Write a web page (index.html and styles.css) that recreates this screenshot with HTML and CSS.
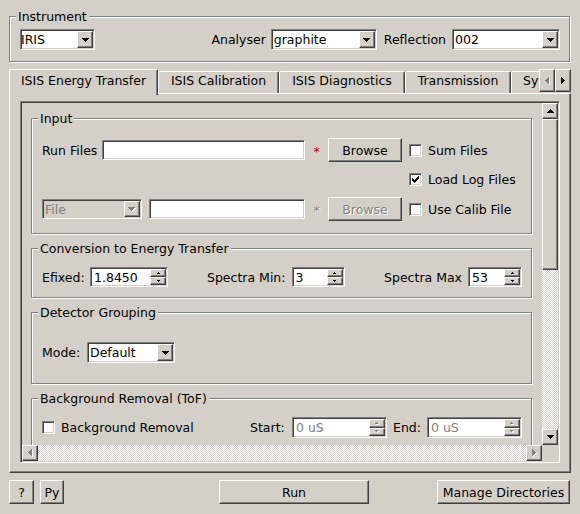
FILE: index.html
```html
<!DOCTYPE html>
<html>
<head>
<meta charset="utf-8">
<title>Indirect Data Reduction</title>
<link rel="stylesheet" href="styles.css">
</head>
<body>
<div class="window">
  <fieldset class="group instrument">
    <legend>Instrument</legend>
    <div class="inst-row">
      <div class="combo c-iris"><span class="combo-text tight">IRIS</span><span class="combo-btn"><svg width="7" height="4"><path d="M0 0h7v1h-1v1h-1v1h-1v1h-1v-1h-1v-1h-1v-1h-1z"/></svg></span></div>
      <span class="lbl analyser">Analyser</span>
      <div class="combo c-analyser"><span class="combo-text">graphite</span><span class="combo-btn"><svg width="7" height="4"><path d="M0 0h7v1h-1v1h-1v1h-1v1h-1v-1h-1v-1h-1v-1h-1z"/></svg></span></div>
      <span class="lbl reflection">Reflection</span>
      <div class="combo c-refl"><span class="combo-text">002</span><span class="combo-btn"><svg width="7" height="4"><path d="M0 0h7v1h-1v1h-1v1h-1v1h-1v-1h-1v-1h-1v-1h-1z"/></svg></span></div>
    </div>
  </fieldset>

  <div class="tabwidget">
    <div class="tabbar">
      <div class="tab sel t0">ISIS Energy Transfer</div>
      <div class="tab t1">ISIS Calibration</div>
      <div class="tab t2">ISIS Diagnostics</div>
      <div class="tab t3">Transmission</div>
      <div class="tab t4">Sy</div>
      <div class="tabscroll">
        <span class="raised tsb"><svg width="5" height="8"><path fill="#fff" transform="translate(1,1)" d="M3 0h1v7h-1v-1h-1v-1h-1v-1h-1v-1h1v-1h1v-1h1z"/><path fill="#808080" d="M3 0h1v7h-1v-1h-1v-1h-1v-1h-1v-1h1v-1h1v-1h1z"/></svg></span>
        <span class="raised tsb"><svg width="4" height="7"><path d="M0 0h1v1h1v1h1v1h1v1h-1v1h-1v1h-1v1h-1z"/></svg></span>
      </div>
    </div>
    <div class="pane">
      <div class="scrollarea">
        <div class="viewport">
          <div class="content">
            <fieldset class="group g-input">
              <legend>Input</legend>
              <div class="input-grid">
                <div class="filerow">
                  <span class="lbl runlbl">Run Files</span>
                  <div class="lineedit grow"></div>
                  <span class="star req">*</span>
                  <div class="btn browse">Browse</div>
                </div>
                <label class="check"><span class="box"></span><span>Sum Files</span></label>
                <div></div>
                <label class="check"><span class="box"><svg width="11" height="11"><path d="M2 4h1v3h-1zM3 5h1v3h-1zM4 6h1v3h-1zM5 5h1v3h-1zM6 4h1v3h-1zM7 3h1v3h-1zM8 2h1v3h-1z"/></svg></span><span>Load Log Files</span></label>
                <div class="filerow">
                  <div class="combo c-file disabled"><span class="combo-text">File</span><span class="combo-btn"><svg width="8" height="5"><path fill="#fff" transform="translate(1,1)" d="M0 0h7v1h-1v1h-1v1h-1v1h-1v-1h-1v-1h-1v-1h-1z"/><path fill="#808080" d="M0 0h7v1h-1v1h-1v1h-1v1h-1v-1h-1v-1h-1v-1h-1z"/></svg></span></div>
                  <div class="lineedit grow"></div>
                  <span class="star off">*</span>
                  <div class="btn browse disabled">Browse</div>
                </div>
                <label class="check"><span class="box"></span><span>Use Calib File</span></label>
              </div>
            </fieldset>

            <fieldset class="group g-conv">
              <legend>Conversion to Energy Transfer</legend>
              <div class="conv-grid">
                <span class="lbl">Efixed:</span>
                <div class="spin"><span class="spin-text">1.8450</span><span class="spin-btns"><span class="raised sb"><svg width="3" height="2"><path d="M1 0h1v1h1v1h-3v-1h1z"/></svg></span><span class="raised sb"><svg width="3" height="2"><path d="M0 0h3v1h-1v1h-1v-1h-1z"/></svg></span></span></div>
                <span class="lbl rlbl">Spectra Min:</span>
                <div class="spin"><span class="spin-text">3</span><span class="spin-btns"><span class="raised sb"><svg width="3" height="2"><path d="M1 0h1v1h1v1h-3v-1h1z"/></svg></span><span class="raised sb"><svg width="3" height="2"><path d="M0 0h3v1h-1v1h-1v-1h-1z"/></svg></span></span></div>
                <span class="lbl rlbl">Spectra Max</span>
                <div class="spin"><span class="spin-text">53</span><span class="spin-btns"><span class="raised sb"><svg width="3" height="2"><path d="M1 0h1v1h1v1h-3v-1h1z"/></svg></span><span class="raised sb"><svg width="3" height="2"><path d="M0 0h3v1h-1v1h-1v-1h-1z"/></svg></span></span></div>
              </div>
            </fieldset>

            <fieldset class="group g-det">
              <legend>Detector Grouping</legend>
              <div class="det-row">
                <span class="lbl modelbl">Mode:</span>
                <div class="combo c-mode"><span class="combo-text">Default</span><span class="combo-btn"><svg width="7" height="4"><path d="M0 0h7v1h-1v1h-1v1h-1v1h-1v-1h-1v-1h-1v-1h-1z"/></svg></span></div>
              </div>
            </fieldset>

            <fieldset class="group g-bg">
              <legend>Background Removal (ToF)</legend>
              <div class="bg-grid">
                <label class="check"><span class="box"></span><span>Background Removal</span></label>
                <span class="lbl">Start:</span>
                <div class="spin tall off"><span class="spin-text">0 uS</span><span class="spin-btns"><span class="raised sb"><svg width="4" height="3"><path fill="#fff" transform="translate(1,1)" d="M1 0h1v1h1v1h-3v-1h1z"/><path fill="#808080" d="M1 0h1v1h1v1h-3v-1h1z"/></svg></span><span class="raised sb"><svg width="4" height="3"><path fill="#fff" transform="translate(1,1)" d="M0 0h3v1h-1v1h-1v-1h-1z"/><path fill="#808080" d="M0 0h3v1h-1v1h-1v-1h-1z"/></svg></span></span></div>
                <span class="lbl endlbl">End:</span>
                <div class="spin tall off"><span class="spin-text">0 uS</span><span class="spin-btns"><span class="raised sb"><svg width="4" height="3"><path fill="#fff" transform="translate(1,1)" d="M1 0h1v1h1v1h-3v-1h1z"/><path fill="#808080" d="M1 0h1v1h1v1h-3v-1h1z"/></svg></span><span class="raised sb"><svg width="4" height="3"><path fill="#fff" transform="translate(1,1)" d="M0 0h3v1h-1v1h-1v-1h-1z"/><path fill="#808080" d="M0 0h3v1h-1v1h-1v-1h-1z"/></svg></span></span></div>
              </div>
            </fieldset>
          </div>
        </div>
        <div class="vscroll">
          <span class="raised sbtn"><svg width="7" height="4"><path d="M3 0h1v1h1v1h1v1h1v1h-7v-1h1v-1h1v-1h1z"/></svg></span>
          <span class="raised vhandle"></span>
          <span class="groove"></span>
          <span class="raised sbtn"><svg width="7" height="4"><path d="M0 0h7v1h-1v1h-1v1h-1v1h-1v-1h-1v-1h-1v-1h-1z"/></svg></span>
        </div>
        <div class="hscroll">
          <span class="raised sbtn"><svg width="5" height="8"><path fill="#fff" transform="translate(1,1)" d="M3 0h1v7h-1v-1h-1v-1h-1v-1h-1v-1h1v-1h1v-1h1z"/><path fill="#808080" d="M3 0h1v7h-1v-1h-1v-1h-1v-1h-1v-1h1v-1h1v-1h1z"/></svg></span>
          <span class="groove"></span>
          <span class="raised sbtn"><svg width="5" height="8"><path fill="#fff" transform="translate(1,1)" d="M0 0h1v1h1v1h1v1h1v1h-1v1h-1v1h-1v1h-1z"/><path fill="#808080" d="M0 0h1v1h1v1h1v1h1v1h-1v1h-1v1h-1v1h-1z"/></svg></span>
        </div>
        <div class="corner"></div>
      </div>
    </div>
  </div>

  <div class="bottombar">
    <div class="btn b-help">?</div>
    <div class="btn b-py">Py</div>
    <div class="btn b-run">Run</div>
    <div class="btn b-manage">Manage Directories</div>
  </div>
</div>
</body>
</html>
```

FILE: styles.css
```css
* { box-sizing: border-box; }
html, body { margin: 0; padding: 0; }
body {
  background: #d4d0c8;
  font-family: "DejaVu Sans", "Liberation Sans", sans-serif;
  font-size: 12.5px;
  line-height: 15px;
  color: #000;
  width: 580px;
  height: 514px;
  overflow: hidden;
}
svg { display: block; shape-rendering: crispEdges; }

.window {
  padding: 9px 9px 10px 9px;
  display: flex;
  flex-direction: column;
}

/* ---------- bevels ---------- */
.raised {
  background: #d4d0c8;
  border: 1px solid;
  border-color: #fff #404040 #404040 #fff;
  box-shadow: inset -1px -1px #808080;
  display: flex;
  align-items: center;
  justify-content: center;
}

/* ---------- group boxes ---------- */
.group {
  margin: 0 1px 0 0;
  padding: 0 9px 0 10px;
  border: 1px solid #808080;
  box-shadow: inset 1px 1px #fff, 1px 1px #fff;
  min-width: 0;
  min-inline-size: 0;
}
.group > legend {
  padding: 0 2px;
  margin-left: -4px;
  line-height: 15px;
  background: #d4d0c8;
  white-space: nowrap;
}
.instrument { padding-top: 5px; padding-bottom: 11px; }
.g-input { padding-top: 12px; padding-bottom: 12px; }
.g-conv { padding-top: 11px; padding-bottom: 10px; }
.g-det { padding-top: 22px; padding-bottom: 20px; }
.g-bg { padding-top: 11px; padding-bottom: 11px; }

.lbl { white-space: nowrap; }

/* ---------- instrument row ---------- */
.inst-row {
  display: flex;
  align-items: center;
  height: 21px;
}
.c-iris { width: 75px; }
.analyser { margin-left: auto; margin-right: 5px; }
.c-analyser { width: 106px; }
.reflection { margin-left: 7px; margin-right: 6px; }
.c-refl { width: 108px; }

/* ---------- combo ---------- */
.combo {
  display: flex;
  align-items: stretch;
  height: 21px;
  border: 1px solid;
  border-color: #808080 #fff #fff #808080;
  box-shadow: inset 1px 1px #404040, inset -1px -1px #d4d0c8;
  padding: 1px;
  background: #fff;
  flex: none;
}
.combo-text {
  flex: 1;
  padding-left: 1px;
  white-space: nowrap;
  overflow: hidden;
  display: flex;
  align-items: center;
}
.combo-text.tight { padding-left: 0; margin-left: -1px; }
.combo-btn {
  width: 16px;
  background: #d4d0c8;
  border: 1px solid;
  border-color: #fff #404040 #404040 #fff;
  box-shadow: inset -1px -1px #808080;
  display: flex;
  align-items: center;
  justify-content: center;
}
.combo.disabled { background: #d4d0c8; }
.combo.disabled .combo-text { color: #808080; }
.c-file { width: 100px; height: 20px; }
.c-mode { width: 88px; }

/* ---------- tabs ---------- */
.tabwidget { margin-top: 7px; display: flex; flex-direction: column; }
.tabbar {
  display: flex;
  height: 24px;
  align-items: flex-start;
}
.tab {
  height: 22px;
  margin-top: 2px;
  border-top: 1px solid #fff;
  border-left: 1px solid #fff;
  border-right: 1px solid #404040;
  border-radius: 2px 2px 0 0;
  box-shadow: inset -1px 0 #808080;
  padding-top: 1px;
  text-align: center;
  white-space: nowrap;
  flex: none;
}
.tab.sel {
  height: 26px;
  margin-top: 0;
  padding-top: 3px;
  position: relative;
  z-index: 1;
  background: #d4d0c8;
}
.t0 { width: 149px; }
.t1 { width: 121px; }
.t2 { width: 126px; }
.t3 { width: 106px; }
.t4 {
  width: 28px;
  text-align: left;
  padding-left: 11px;
  border-right: none;
  box-shadow: none;
  border-radius: 2px 0 0 0;
}
.tabscroll { display: flex; flex: none; }
.tsb { width: 16px; height: 23px; }

.pane {
  height: 380px;
  border: 1px solid;
  border-color: #fff #404040 #404040 #fff;
  box-shadow: inset -1px -1px #808080;
  padding: 7px 10px 9px 10px;
  display: flex;
}

/* ---------- scroll area ---------- */
.scrollarea {
  flex: 1;
  display: grid;
  grid-template-columns: 1fr 16px;
  grid-template-rows: 1fr 16px;
  border: 1px solid;
  border-color: #808080 #fff #fff #808080;
  box-shadow: inset 1px 1px #404040, inset -1px -1px #d4d0c8;
  padding: 1px;
}
.viewport { overflow: hidden; min-height: 0; }
.content {
  padding: 8px 9px 0 9px;
  display: flex;
  flex-direction: column;
  gap: 7px;
}
.vscroll { display: flex; flex-direction: column; }
.hscroll { display: flex; }
.sbtn { width: 16px; height: 16px; flex: none; }
.vhandle { height: 151px; flex: none; }
.groove {
  flex: 1;
  background-color: #fff;
  background-image: repeating-conic-gradient(#d4d0c8 0 25%, #fff 0 50%);
  background-size: 2px 2px;
}

/* ---------- input group ---------- */
.input-grid {
  display: grid;
  grid-template-columns: 360px auto;
  grid-template-rows: 24px 25px 24px;
  column-gap: 7px;
  row-gap: 5px;
  align-items: center;
}
.filerow { display: flex; align-items: center; height: 24px; }
.runlbl { width: 60px; flex: none; }
.c-file { margin-right: 7px; }
.lineedit {
  height: 20px;
  border: 1px solid;
  border-color: #808080 #fff #fff #808080;
  box-shadow: inset 1px 1px #404040, inset -1px -1px #d4d0c8;
  background: #fff;
}
.grow { flex: 1; }
.star { width: 23px; flex: none; text-align: center; padding-top: 3px; }
.star.req { color: #c00000; }
.star.off { color: #808080; text-shadow: 1px 1px #fff; }

.btn {
  height: 24px;
  background: #d4d0c8;
  border: 1px solid;
  border-color: #fff #404040 #404040 #fff;
  box-shadow: inset -1px -1px #808080;
  display: flex;
  align-items: center;
  justify-content: center;
  white-space: nowrap;
  flex: none;
}
.btn.disabled { color: #808080; text-shadow: 1px 1px #fff; }
.browse { width: 74px; }

.check { display: flex; align-items: center; gap: 6px; white-space: nowrap; }
.check .box {
  width: 13px;
  height: 13px;
  flex: none;
  border: 1px solid;
  border-color: #808080 #fff #fff #808080;
  box-shadow: inset 1px 1px #404040, inset -1px -1px #d4d0c8;
  background: #fff;
}

/* ---------- spin boxes ---------- */
.spin {
  display: flex;
  height: 20px;
  border: 1px solid;
  border-color: #808080 #fff #fff #808080;
  box-shadow: inset 1px 1px #404040, inset -1px -1px #d4d0c8;
  padding: 1px;
  background: #fff;
}
.spin.tall { height: 21px; }
.spin-text { flex: 1; padding-left: 2px; display: flex; align-items: center; white-space: nowrap; }
.spin.off .spin-text { color: #808080; }
.spin-btns { width: 16px; display: flex; flex-direction: column; }
.sb { flex: 1; }

.conv-grid {
  display: grid;
  grid-template-columns: 48px 78px 1fr 53px 1fr 54px;
  align-items: center;
  height: 20px;
}
.rlbl { text-align: right; padding-right: 6px; }

.det-row { display: flex; align-items: center; height: 21px; }
.modelbl { width: 45px; flex: none; }

.bg-grid {
  display: grid;
  grid-template-columns: 1fr 42px 95px 40px 95px;
  align-items: center;
  height: 21px;
}
.endlbl { padding-left: 6px; }

/* ---------- bottom bar ---------- */
.bottombar {
  margin-top: 7px;
  display: flex;
  height: 24px;
}
.b-help { width: 25px; }
.b-py { width: 24px; margin-left: 6px; }
.b-run { width: 150px; margin-left: 155px; }
.b-manage { width: 133px; margin-left: auto; margin-right: 1px; }
```
